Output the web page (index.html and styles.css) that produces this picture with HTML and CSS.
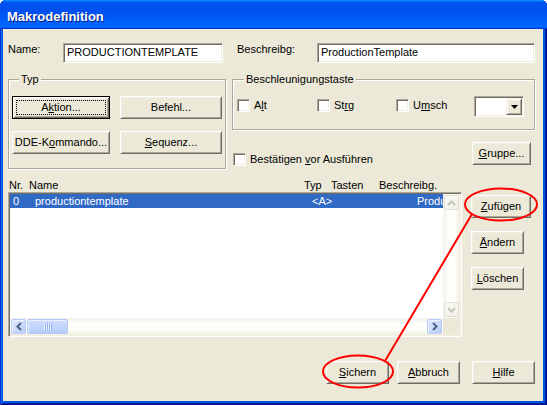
FILE: index.html
```html
<!DOCTYPE html>
<html lang="de">
<head>
<meta charset="utf-8">
<title>Makrodefinition</title>
<link rel="stylesheet" href="styles.css">
</head>
<body>
<div class="window">
  <div class="titlebar"><span class="title">Makrodefinition</span></div>
  <div class="client">
    <div class="row-top">
      <span class="lbl lbl-name">Name:</span>
      <div class="edit edit-name">PRODUCTIONTEMPLATE</div>
      <span class="lbl lbl-desc">Beschreibg:</span>
      <div class="edit edit-desc">ProductionTemplate</div>
    </div>

    <div class="row-groups">
      <div class="group group-typ">
        <span class="legend">Typ</span>
        <div class="typ-grid">
          <button class="btn btn-default"><span class="focus">A<u>k</u>tion...</span></button>
          <button class="btn">Befehl...</button>
          <button class="btn">DDE-K<u>o</u>mmando...</button>
          <button class="btn"><u>S</u>equenz...</button>
        </div>
      </div>

      <div class="right-col">
        <div class="group group-accel">
          <span class="legend">Beschleunigungstaste</span>
          <div class="accel-row">
            <div class="check ck-alt"><span class="box"></span><span>A<u>l</u>t</span></div>
            <div class="check ck-strg"><span class="box"></span><span>St<u>r</u>g</span></div>
            <div class="check ck-umsch"><span class="box"></span><span>U<u>m</u>sch</span></div>
            <div class="combo">
              <span class="combo-btn">
                <svg width="7" height="4" viewBox="0 0 7 4"><path d="M0 0H7L3.5 4Z" fill="#000"/></svg>
              </span>
            </div>
          </div>
        </div>
        <div class="confirm-row">
          <div class="check ck-confirm"><span class="box"></span><span>Bestätigen <u>v</u>or Ausführen</span></div>
          <button class="btn btn-gruppe"><u>G</u>ruppe...</button>
        </div>
      </div>
    </div>

    <div class="row-list">
      <div class="list-col">
        <div class="list-head">
          <span class="h-nr">Nr.</span>
          <span class="h-name">Name</span>
          <span class="h-typ">Typ</span>
          <span class="h-keys">Tasten</span>
          <span class="h-desc">Beschreibg.</span>
        </div>
        <div class="listbox">
          <div class="list-view">
            <div class="list-row selected">
              <span class="c-nr">0</span>
              <span class="c-name">productiontemplate</span>
              <span class="c-typ">&lt;A&gt;</span>
              <span class="c-desc">ProductionTemplate</span>
            </div>
          </div>
          <div class="vscroll">
            <span class="sb-btn dis">
              <svg width="9" height="6" viewBox="0 0 9 6"><path d="M1 5L4.5 1.5L8 5" fill="none" stroke="#C5C4B8" stroke-width="2"/></svg>
            </span>
            <span class="sb-btn dis">
              <svg width="9" height="6" viewBox="0 0 9 6"><path d="M1 1L4.5 4.5L8 1" fill="none" stroke="#C5C4B8" stroke-width="2"/></svg>
            </span>
          </div>
          <div class="hscroll">
            <span class="sb-btn en">
              <svg width="6" height="9" viewBox="0 0 6 9"><path d="M5 1L1.5 4.5L5 8" fill="none" stroke="#4D6185" stroke-width="2"/></svg>
            </span>
            <span class="thumb"><span class="grip"></span></span>
            <span class="track-fill"></span>
            <span class="sb-btn en">
              <svg width="6" height="9" viewBox="0 0 6 9"><path d="M1 1L4.5 4.5L1 8" fill="none" stroke="#4D6185" stroke-width="2"/></svg>
            </span>
          </div>
          <div class="corner"></div>
        </div>
      </div>
      <div class="side-buttons">
        <button class="btn btn-add"><span><u>Z</u>ufügen</span></button>
        <button class="btn btn-side"><span><u>Ä</u>ndern</span></button>
        <button class="btn btn-side"><span><u>L</u>öschen</span></button>
      </div>
    </div>

    <div class="row-bottom">
      <button class="btn btn-foot btn-save"><u>S</u>ichern</button>
      <button class="btn btn-foot btn-cancel"><u>A</u>bbruch</button>
      <button class="btn btn-foot"><u>H</u>ilfe</button>
    </div>
  </div>

  <svg class="annot" width="547" height="405" viewBox="0 0 547 405">
    <ellipse cx="501" cy="204.5" rx="36" ry="16" fill="none" stroke="#FF0000" stroke-width="2"/>
    <ellipse cx="358" cy="371.5" rx="35" ry="16" fill="none" stroke="#FF0000" stroke-width="2"/>
    <line x1="472" y1="214" x2="385" y2="361" stroke="#FF0000" stroke-width="2"/>
  </svg>
</div>
</body>
</html>
```

FILE: styles.css
```css
html, body {
  margin: 0;
  padding: 0;
  background: #ffffff;
}

body {
  font-family: "Liberation Sans", Arial, sans-serif;
  font-size: 11px;
  line-height: 13px;
  color: #000;
}

.window {
  position: relative;
  width: 547px;
  height: 405px;
  background: #0055E5;
  border-radius: 6px 6px 0 0;
  overflow: hidden;
  display: flex;
  flex-direction: column;
  box-shadow: inset 1px 0 #0831D9, inset -1px -1px #00138C, inset 2px 0 #166AEE, inset -2px -2px #001EA0;
}

.titlebar {
  height: 29px;
  box-sizing: border-box;
  padding: 9px 0 0 7px;
  background: linear-gradient(180deg, #0997ff, #0053ee 8%, #0050ee 40%, #0066ff 88%, #0066ff 93%, #005bff 95%, #003dd7 96%, #003dd7);
  flex: none;
}

.title {
  color: #fff;
  font-weight: bold;
  font-size: 13px;
  line-height: 15px;
  text-shadow: 1px 1px #0A1883;
  display: block;
}

.client {
  flex: 1;
  margin: 0 4px 4px 3px;
  background: #ECE9D8;
  padding: 14px 8px 0 5px;
  display: flex;
  flex-direction: column;
}

/* ---------- top row ---------- */
.row-top {
  display: flex;
  height: 20px;
}

.lbl { white-space: nowrap; }
.lbl-name { width: 55px; }
.lbl-desc { width: 80px; margin-left: 14px; }

.edit {
  box-sizing: border-box;
  height: 20px;
  background: #fff;
  border: 1px solid;
  border-color: #ACA899 #fff #fff #ACA899;
  box-shadow: inset 1px 1px #716F64, inset -1px -1px #F1EFE2;
  padding: 2px 0 0 3px;
  white-space: nowrap;
  overflow: hidden;
}
.edit-name { width: 160px; }
.edit-desc { flex: 1; }

/* ---------- groups ---------- */
.row-groups {
  display: flex;
  margin-top: 16px;
}

.group {
  box-sizing: border-box;
  border: 1px solid #ACA899;
  box-shadow: inset 1px 1px #fff, 1px 1px #fff;
}

.legend {
  display: block;
  width: max-content;
  height: 13px;
  margin: -7px 0 0 7px;
  padding: 0 2px;
  background: #ECE9D8;
}

.group-typ {
  width: 218px;
  height: 90px;
  padding: 0 3px;
  margin-right: 6px;
}

.typ-grid {
  display: grid;
  grid-template-columns: 98px 102px;
  grid-auto-rows: 23px;
  column-gap: 10px;
  row-gap: 12px;
  margin-top: 10px;
}

.btn {
  box-sizing: border-box;
  height: 23px;
  margin: 0;
  padding: 0 0 1px;
  font: inherit;
  color: #000;
  background: #ECE9D8;
  border: 1px solid;
  border-color: #fff #716F64 #716F64 #fff;
  box-shadow: inset 1px 1px #F1EFE2, inset -1px -1px #ACA899;
  display: flex;
  align-items: center;
  justify-content: center;
  white-space: nowrap;
}

.btn-default {
  border: 1px solid #000;
  box-shadow: inset 1px 1px #fff, inset -1px -1px #716F64, inset 2px 2px #F1EFE2, inset -2px -2px #ACA899;
  padding: 3px;
}

.focus {
  flex: 1;
  align-self: stretch;
  display: flex;
  align-items: center;
  justify-content: center;
  outline: 1px dotted #000;
  outline-offset: -1px;
  padding-bottom: 1px;
}

.right-col {
  width: 303px;
  display: flex;
  flex-direction: column;
}

.group-accel {
  height: 51px;
  padding-left: 4px;
}

.accel-row {
  display: flex;
  align-items: flex-start;
  margin-top: 10px;
}

.check {
  display: flex;
  gap: 4px;
  margin-top: 3px;
  white-space: nowrap;
}

.box {
  box-sizing: border-box;
  width: 13px;
  height: 13px;
  flex: none;
  background: #fff;
  border: 1px solid;
  border-color: #ACA899 #fff #fff #ACA899;
  box-shadow: inset 1px 1px #716F64, inset -1px -1px #F1EFE2;
}

.ck-alt { width: 80px; }
.ck-strg { width: 79px; }
.ck-umsch { width: 78px; }

.combo {
  box-sizing: border-box;
  width: 50px;
  height: 21px;
  background: #fff;
  border: 1px solid;
  border-color: #ACA899 #fff #fff #ACA899;
  box-shadow: inset 1px 1px #716F64, inset -1px -1px #F1EFE2;
  padding: 1px;
  display: flex;
  justify-content: flex-end;
}

.combo-btn {
  box-sizing: border-box;
  width: 16px;
  height: 17px;
  background: #ECE9D8;
  border: 1px solid;
  border-color: #F1EFE2 #716F64 #716F64 #F1EFE2;
  box-shadow: inset 1px 1px #fff, inset -1px -1px #ACA899;
  display: flex;
  align-items: center;
  justify-content: center;
}

.confirm-row {
  display: flex;
  justify-content: space-between;
  align-items: flex-start;
  margin-top: 12px;
  padding: 0 4px 0 1px;
}

.ck-confirm { margin-top: 11px; }

.btn-gruppe { width: 59px; }

/* ---------- list ---------- */
.row-list {
  display: flex;
  margin-top: 10px;
}

.list-col { width: 454px; }

.list-head {
  display: flex;
  height: 13px;
  padding-left: 1px;
  white-space: nowrap;
}
.h-nr { width: 20px; }
.h-name { width: 275px; }
.h-typ { width: 27px; }
.h-keys { width: 48px; }

.listbox {
  box-sizing: border-box;
  height: 145px;
  background: #fff;
  border: 1px solid;
  border-color: #ACA899 #fff #fff #ACA899;
  box-shadow: inset 1px 1px #716F64, inset -1px -1px #F1EFE2;
  padding: 1px;
  display: grid;
  grid-template-columns: 1fr 17px;
  grid-template-rows: 1fr 17px;
}

.list-view {
  overflow: hidden;
  min-width: 0;
}

.list-row {
  display: flex;
  height: 14px;
  box-sizing: border-box;
  padding: 1px 0 0 3px;
  white-space: nowrap;
}

.list-row.selected {
  background: #316AC5;
  color: #fff;
}

.c-nr { width: 22px; flex: none; }
.c-name { width: 277px; flex: none; }
.c-typ { width: 105px; flex: none; }
.c-desc { flex: 1; min-width: 0; overflow: hidden; }

.vscroll {
  display: flex;
  flex-direction: column;
  justify-content: space-between;
  background: linear-gradient(to right, #F3F1EC, #FEFEFB 35%, #FEFEFB 70%, #F1EFE2);
}

.hscroll {
  display: flex;
  align-items: center;
  background: linear-gradient(to bottom, #F3F1EC, #FEFEFB 35%, #FEFEFB 70%, #F1EFE2);
}

.sb-btn {
  box-sizing: border-box;
  width: 15px;
  height: 15px;
  margin: 1px;
  border-radius: 2px;
  display: flex;
  align-items: center;
  justify-content: center;
  flex: none;
}

.sb-btn.dis {
  background: linear-gradient(135deg, #FBFBF8, #F0EFE7);
  border: 1px solid #E3E1D6;
}

.sb-btn.en {
  background: linear-gradient(135deg, #DDE7FE, #BBCDF7);
  border: 1px solid #B7CBF7;
  box-shadow: inset 1px 1px #EEF3FE;
}

.thumb {
  box-sizing: border-box;
  width: 41px;
  height: 15px;
  margin: 1px 0 1px 0;
  border-radius: 2px;
  background: linear-gradient(to bottom, #D0DEFD, #C3D5FC 50%, #B8CCF9);
  border: 1px solid #B2C7F5;
  box-shadow: inset 1px 1px #E8EFFE;
  display: flex;
  align-items: center;
  justify-content: center;
  flex: none;
}

.grip {
  width: 8px;
  height: 7px;
  background: repeating-linear-gradient(to right, #EEF4FF 0 1px, #8EB0F6 1px 2px);
}

.track-fill { flex: 1; }

.corner { background: #ECE9D8; }

.side-buttons {
  display: flex;
  flex-direction: column;
  align-items: flex-start;
  gap: 13px;
  margin-left: 9px;
  padding-top: 16px;
}

.btn-add { width: 60px; }
.btn-side { width: 53px; }

/* ---------- bottom ---------- */
.row-bottom {
  display: flex;
  justify-content: flex-end;
  margin-top: 24px;
}

.btn-foot { width: 63px; }
.btn-save { margin-right: 8px; }
.btn-cancel { margin-right: 12px; }

/* ---------- annotations ---------- */
.annot {
  position: absolute;
  left: 0;
  top: 0;
  pointer-events: none;
}
```
